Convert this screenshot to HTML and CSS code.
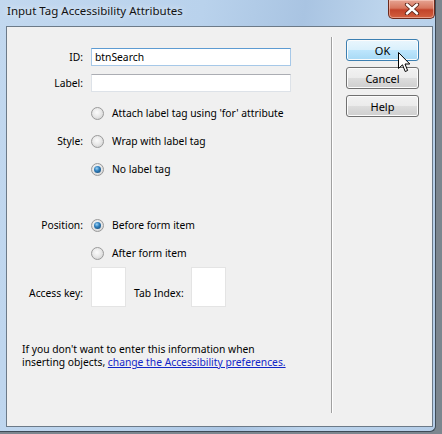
FILE: index.html
```html
<!doctype html>
<html lang="en">
  <head>
    <meta charset="UTF-8" />
    <title>Input Tag Accessibility Attributes</title>
    <link rel="stylesheet" href="styles.css">
  </head>
  <body>
    <div class="window">
      <div class="titlebar">
        <span class="title">Input Tag Accessibility Attributes</span>
        <span class="close">
          <svg width="16" height="12" viewBox="0 0 16 12">
            <path d="M3 1.5 L13 10.5 M13 1.5 L3 10.5" stroke="#5a2418" stroke-width="4.2" stroke-linecap="round" />
            <path d="M3 1.5 L13 10.5 M13 1.5 L3 10.5" stroke="#ffffff" stroke-width="2.4" stroke-linecap="round" />
          </svg>
        </span>
      </div>

      <div class="client">
        <div class="form">
          <div class="row field-row">
            <span class="lbl">ID:</span>
            <div class="textbox focus">btnSearch</div>
          </div>
          <div class="row field-row gap-after">
            <span class="lbl">Label:</span>
            <div class="textbox"></div>
          </div>

          <div class="row radio-row">
            <span class="lbl"></span>
            <div class="option"><span class="radio"></span>Attach label tag using 'for' attribute</div>
          </div>
          <div class="row radio-row">
            <span class="lbl">Style:</span>
            <div class="option"><span class="radio"></span>Wrap with label tag</div>
          </div>
          <div class="row radio-row group-end">
            <span class="lbl"></span>
            <div class="option"><span class="radio checked"></span>No label tag</div>
          </div>

          <div class="row radio-row">
            <span class="lbl">Position:</span>
            <div class="option"><span class="radio checked"></span>Before form item</div>
          </div>
          <div class="row radio-row">
            <span class="lbl"></span>
            <div class="option"><span class="radio"></span>After form item</div>
          </div>

          <div class="row key-row">
            <span class="lbl">Access key:</span>
            <div class="keys">
              <div class="keybox"></div>
              <span class="key-lbl">Tab Index:</span>
              <div class="keybox"></div>
            </div>
          </div>

          <p class="note">
            If you don't want to enter this information when<br>
            inserting objects, <a href="#">change the Accessibility preferences.</a>
          </p>
        </div>

        <div class="sep"></div>

        <div class="buttons">
          <button class="btn hover">OK</button>
          <button class="btn">Cancel</button>
          <button class="btn">Help</button>
          <svg class="cursor" width="13" height="21" viewBox="0 0 13 21">
            <path d="M0.5 0.5 L0.5 16.5 L4.5 12.8 L7.2 19.5 L9.6 18.5 L7 12 L11.8 12 Z" fill="#ffffff" stroke="#000000" stroke-width="1" stroke-linejoin="miter" />
          </svg>
        </div>
      </div>
    </div>
  </body>
</html>
```

FILE: styles.css
```css
body {
  margin: 0;
  width: 442px;
  height: 434px;
  overflow: hidden;
  background-color: #7c868f;
  font-family: "Noto Sans", "Liberation Sans", Arial, sans-serif;
  font-size: 10.3px;
  color: #000000;
}
.window {
  width: 436px;
  height: 432px;
  box-sizing: border-box;
  padding: 0 2px 4px 6px;
  display: flex;
  flex-direction: column;
  border-right: 1px solid #3e4a56;
  border-bottom: 1px solid #3e4a56;
  border-bottom-right-radius: 6px;
  background: linear-gradient(100deg, #c2d8ef 0%, #b9d2ec 40%, #a9c4e2 60%, #bcd4ec 75%, #b4cde8 100%);
}
.titlebar {
  height: 26px;
  display: flex;
  align-items: flex-start;
}
.title {
  margin: 3px 0 0 1px;
  font-size: 11.5px;
  color: #121212;
  text-shadow: 0 0 6px rgba(255, 255, 255, 0.9);
}
.close {
  margin-left: auto;
  margin-right: -2px;
  width: 47px;
  height: 19px;
  box-sizing: border-box;
  display: flex;
  align-items: center;
  justify-content: center;
  border: 1px solid #6b2a1d;
  border-top: none;
  border-radius: 0 0 5px 5px;
  background: linear-gradient(#e6a493 0%, #d7765e 45%, #c2432a 55%, #d2603f 100%);
  box-shadow: inset 0 0 0 1px rgba(255, 220, 210, 0.5);
}
.client {
  flex: 1;
  display: flex;
  border: 1px solid #6c7a88;
  background-color: #f0f0f0;
}
.form {
  width: 324px;
  padding-top: 21px;
}
.row {
  display: grid;
  grid-template-columns: 76px auto;
  column-gap: 8px;
  align-items: center;
}
.lbl {
  text-align: right;
  white-space: nowrap;
}
.field-row {
  height: 18px;
  margin-bottom: 8px;
}
.field-row.gap-after {
  margin-bottom: 7px;
}
.textbox {
  width: 200px;
  height: 18px;
  box-sizing: border-box;
  padding: 0 3px;
  line-height: 16px;
  background-color: #ffffff;
  border: 1px solid #dde2e8;
  border-top-color: #abadb3;
}
.textbox.focus {
  border-color: #a6c8e8;
  border-top-color: #5d9bd2;
}
.radio-row {
  height: 28px;
}
.radio-row.group-end {
  margin-bottom: 28px;
}
.option {
  display: flex;
  align-items: center;
  gap: 8px;
  white-space: nowrap;
}
.radio {
  width: 13px;
  height: 13px;
  box-sizing: border-box;
  border-radius: 50%;
  border: 1px solid #9a9a9a;
  background: radial-gradient(circle at 45% 40%, #fbfbfb 0%, #e9e9e9 45%, #c9c9c9 100%);
  display: flex;
  align-items: center;
  justify-content: center;
}
.radio.checked::after {
  content: "";
  width: 7px;
  height: 7px;
  border-radius: 50%;
  background: radial-gradient(circle at 40% 35%, #9fd4f5 0%, #2f7fbd 40%, #133f66 100%);
}
.key-row {
  height: 40px;
  align-items: end;
}
.key-row .lbl {
  padding-bottom: 7px;
}
.keys {
  display: flex;
  align-items: flex-end;
}
.keybox {
  width: 35px;
  height: 40px;
  box-sizing: border-box;
  background-color: #ffffff;
  border: 1px solid #e4e4e4;
}
.key-lbl {
  margin: 0 7px 0 8px;
  padding-bottom: 7px;
  white-space: nowrap;
}
.note {
  margin: 36px 0 0 15px;
  line-height: 13px;
}
.note a {
  color: #1226c8;
}
.sep {
  width: 1px;
  margin: 10px 0 13px;
  background-color: #a0a0a0;
  border-right: 1px solid #ffffff;
}
.buttons {
  position: relative;
  padding: 12px 0 0 13px;
  display: flex;
  flex-direction: column;
  gap: 6px;
}
.btn {
  width: 73px;
  height: 22px;
  padding: 0;
  font-family: inherit;
  font-size: 11px;
  color: #000000;
  border: 1px solid #707070;
  border-radius: 3px;
  background: linear-gradient(#f2f2f2 0%, #ebebeb 50%, #dddddd 50%, #cfcfcf 100%);
  box-shadow: inset 0 0 0 1px #fcfcfc;
}
.btn.hover {
  border-color: #3c7fb1;
  background: linear-gradient(#eaf6fd 0%, #d9f0fc 50%, #bee6fd 50%, #a7d9f5 100%);
}
.cursor {
  position: absolute;
  left: 65px;
  top: 25px;
}
```
